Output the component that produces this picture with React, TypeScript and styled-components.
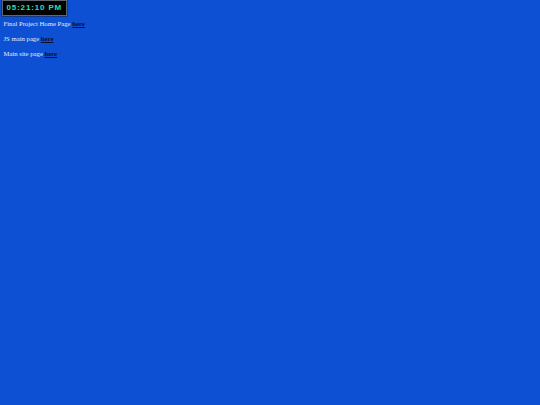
import styled, { createGlobalStyle } from 'styled-components';

const GlobalStyle = createGlobalStyle`
    html, body {
        margin: 0;
        padding: 0;
        background-color: #0d50d4;
    }
    body {
        font-family: "Liberation Serif", "Times New Roman", serif;
    }
`;

const Page = styled.main`
    min-height: 405px;
    padding: 0 3.5px;
    color: #e6ecf8;
    font-size: 6.7px;
`;

const Clock = styled.div`
    display: inline-block;
    margin-left: -2px;
    background-color: #000000;
    border: 1.5px solid #5f6670;
    box-shadow: 0 0 0 0.5px #1a2030;
    padding: 2px 3.5px 2px 4px;
    color: #1ae2c6;
    font-family: "Liberation Sans", Arial, sans-serif;
    font-weight: bold;
    font-size: 8px;
    letter-spacing: 0.85px;
    line-height: 10px;
`;

const Line = styled.p`
    margin: 7px 0;
    line-height: 8px;
    &:first-of-type {
        margin-top: 3.5px;
    }
`;

const Link = styled.a`
    color: #0a0f2a;
    font-weight: bold;
    text-decoration: underline;
`;

const pad = (n: number) => n.toString().padStart(2, '0');

const formatTime = (h: number, m: number, s: number) => {
    const hr = h % 12 || 12;
    return `${pad(hr)}:${pad(m)}:${pad(s)} ${h >= 12 ? 'PM' : 'AM'}`;
};

const App = () => {
    const time = formatTime(17, 21, 10);

    return (
        <>
            <GlobalStyle />
            <Page>
                <Clock>{time}</Clock>
                <Line>
                    Final Project Home Page <Link href="#">here</Link>
                </Line>
                <Line>
                    JS main page <Link href="#">here</Link>
                </Line>
                <Line>
                    Main site page <Link href="#">here</Link>
                </Line>
            </Page>
        </>
    );
};

export default App;
